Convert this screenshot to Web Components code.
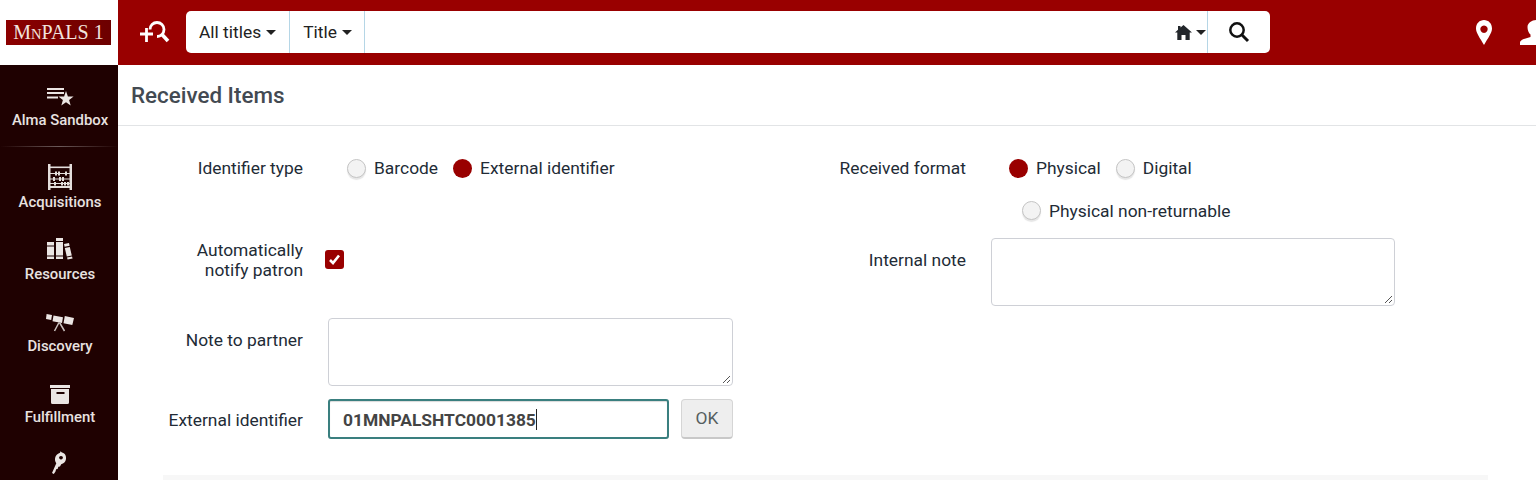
<!DOCTYPE html>
<html lang="en"><head><meta charset="utf-8"><title>Received Items</title>
<style>
html,body{margin:0;height:480px;overflow:hidden;background:#fff}
body{font-family:Roboto,"Liberation Sans",sans-serif;font-size:17.4px;color:#222b36}
alma-app{width:1536px;height:480px}
</style></head><body>
<alma-app>
  <alma-header slot="header"></alma-header>
  <alma-sidebar slot="side">
    <nav-item first h="82" label="Alma Sandbox" icon="sandbox"></nav-item>
    <nav-item h="72" label="Acquisitions" icon="abacus"></nav-item>
    <nav-item h="72" label="Resources" icon="books"></nav-item>
    <nav-item h="71" label="Discovery" icon="telescope"></nav-item>
    <nav-item h="71" label="Fulfillment" icon="box"></nav-item>
    <nav-item h="72" label="" icon="key"></nav-item>
  </alma-sidebar>
  <received-form></received-form>
</alma-app>
<script>
const el=(name,html)=>{customElements.define(name,class extends HTMLElement{
  constructor(){super();this.attachShadow({mode:'open'});if(typeof html!=='function')this.shadowRoot.innerHTML=html}
  connectedCallback(){ if(typeof html==='function') this.shadowRoot.innerHTML=html(this) }
})};
const icons={
sandbox:`<svg style="margin-left:2px" width="28" height="24" viewBox="0 0 28 24" fill="#ebe5e3"><rect x="1" y="4" width="17" height="2"/><rect x="1" y="8" width="17" height="2"/><rect x="1" y="12.500" width="11" height="2"/><path d="M20 7L21.900 12.400 27.600 12.500 23.100 15.900 24.700 21.500 20 18.200 15.300 21.500 16.900 15.900 12.400 12.500 18.100 12.400z"/></svg>`,
abacus:`<svg width="26" height="26" viewBox="0 0 26 26" fill="#e4dedc"><rect x="2" y="0" width="2.500" height="26"/><rect x="23.500" y="0" width="2.500" height="26"/><rect x="4" y="2.500" width="20" height="1.600"/><rect x="4" y="22" width="20" height="2"/><rect x="4" y="9" width="20" height="1"/><rect x="4" y="14.500" width="20" height="1"/><rect x="4" y="19" width="20" height="1"/><rect x="9" y="7.500" width="2" height="4"/><rect x="12" y="7.500" width="2" height="4"/><rect x="19" y="7.500" width="2" height="4"/><rect x="7" y="13" width="2" height="4"/><rect x="13" y="13" width="2" height="4"/><rect x="16" y="13" width="2" height="4"/><rect x="8" y="18" width="2" height="3.500"/><rect x="15" y="18" width="2" height="3.500"/><rect x="18" y="18" width="2" height="3.500"/><rect x="21" y="18" width="2" height="3.500"/></svg>`,
books:`<svg width="28" height="23" viewBox="0 0 28 23" fill="#ebe5e3"><path d="M2 4h7v3.500H2zM2 8.500h7v9H2zM2 18.500h7v2.500H2zM11 0h7v3H11zM11 4h7v13.500H11zM11 18.500h7v2.500H11z"/><path d="M19 6l5-1 .6 2.800-5 1zM19.800 10l5-1 2 8.500-5 1zM22 19.400l5-1 .6 2-5 1z"/></svg>`,
telescope:`<svg width="30" height="24" viewBox="0 0 30 24" fill="#ebe5e3"><path d="M2.600 5L8 6 7.200 11 2 10zM9.500 6.500L19 8.200 18 14 8.500 12.300zM20.800 7L30 9 28.300 16 19.500 14.200z"/><path fill="none" stroke="#c9c1bf" stroke-width="1.500" d="M15 13.500L10.500 22M15.500 13.500L20.500 22"/></svg>`,
box:`<svg style="margin:5px 0 0 2px" width="20" height="19" viewBox="0 0 20 19" fill="#ebe5e3"><path d="M0 0h20v3H0z"/><path fill-rule="evenodd" d="M1 4h18v13.500a1.500 1.500 0 0 1-1.500 1.500h-15A1.500 1.500 0 0 1 1 17.500zM6.500 7v2h8V7z"/></svg>`,
key:`<svg width="16" height="24" viewBox="0 0 16 24" fill="#ebe5e3"><path fill-rule="evenodd" d="M9.500.3l1.400 1.300C13.500 2 15.500 4.500 15 8c-.4 2.700-2.300 4.700-4.800 5.200L9 15.500l-1.600.2-.8 2.300-1.500.2-.6 2.300-1.700 2.500-1.800-1 4.300-9.800C3.500 10 3.500 6 6 3.500 7 2.500 8 2 9 1.700zM10 5a1.900 1.700 0 1 0 .01 0z"/></svg>`
};
el('alma-app',`<style>
:host{display:grid;grid-template-columns:118px 1fr;grid-template-rows:65px 1fr;overflow:hidden}
.h{grid-column:1/3;min-width:0}
.s{min-height:0;overflow:hidden}
.m{min-width:0;overflow:hidden}
</style>
<div class="h"><slot name="header"></slot></div>
<div class="s"><slot name="side"></slot></div>
<div class="m"><slot></slot></div>`);

el('alma-header',`<style>
:host{display:flex;height:65px;background:#990000;font:17.4px/22px Roboto,sans-serif;color:#222}
.logo{width:118px;background:#fff;flex:none;display:flex;align-items:center;justify-content:center}
.mark{width:105px;height:25px;background:linear-gradient(90deg,#8c0000,#7a0000 55%,#6d0000);color:#f1e4de;font:20px/25px "Liberation Serif",serif;text-align:center;white-space:nowrap;margin-right:1px}
.mark small{font-size:14.5px}
.adv{width:68px;flex:none;display:flex;align-items:center;justify-content:center}
.adv svg{margin-left:6px}
.box{width:1084px;height:42px;margin-top:11px;flex:none;background:#fff;border-radius:5px;display:flex;align-items:stretch}
.dd{display:flex;align-items:center;gap:5px;padding:0 13px;border-right:1px solid #b5d6e6;height:42px;box-sizing:border-box}
.dd.second{padding-left:13px;padding-right:12px}
.c{width:0;height:0;border:5px solid transparent;border-top-color:#222;border-bottom:0}
.sp{flex:1}
.home{display:flex;align-items:center;gap:4px;padding-right:1px;border-right:1px solid #b5d6e6}
.go{width:62px;display:flex;align-items:center;justify-content:center}
.r{flex:1;display:flex;align-items:center;justify-content:flex-end;overflow:hidden}
.pin{margin-right:28px}
.user{flex:none;margin-right:-16px;margin-bottom:1px}
</style>
<div class="logo"><div class="mark">M<small>N</small>PALS 1</div></div>
<div class="adv"><svg width="30" height="26" viewBox="0 0 30 26" fill="none" stroke="#fff"><path stroke-width="2.800" d="M0 14h13M6.500 8v14"/><path stroke-width="2.800" d="M10 9.500a7 7 0 1 1 7 7"/><path stroke-width="3.600" d="M22 14.500l6 6.500"/></svg></div>
<div class="box">
 <div class="dd"><span>All titles</span><span class="c"></span></div>
 <div class="dd second"><span>Title</span><span class="c"></span></div>
 <div class="sp"></div>
 <div class="home"><svg width="17" height="15" viewBox="0 0 17 15" fill="#22262b"><path d="M8.500 0L17 7.500h-2.300V15H10.500V10h-4v5H2.300V7.500H0L3 4.800V1h2.500v1.600z"/></svg><span class="c" style="margin-top:1px"></span></div>
 <div class="go"><svg width="22" height="22" viewBox="0 0 22 22" fill="none" stroke="#111"><circle cx="9" cy="9" r="6.700" stroke-width="2.500"/><path stroke-width="3" d="M13.800 13.800L20 20"/></svg></div>
</div>
<div class="r">
 <svg class="pin" width="16" height="25" viewBox="0 0 16 25"><path fill="#fff" fill-rule="evenodd" d="M8 0c4.500 0 8 3.500 8 8.500 0 4.500-4 9.500-8 16.500C4 18 0 13 0 8.500 0 3.500 3.500 0 8 0zm0 5.500a3.700 3.700 0 1 0 .01 0z"/></svg>
 <svg class="user" width="32" height="25" viewBox="0 0 32 25" fill="#fff"><path d="M16 0c4 0 6.500 3 6.500 7 0 3-1.200 6-3 7.600v2.400c4 1.500 10 2.500 10 6v2H0v-2c0-3.500 6-4.500 10.500-6v-2.400C8.500 13 7.500 10 7.500 7 7.500 3 12 0 16 0z"/></svg>
</div>`);

el('alma-sidebar',`<style>:host{display:flex;flex-direction:column;width:118px;height:415px;background:#1f0101;overflow:hidden}</style><slot></slot>`);

el('nav-item',h=>{const f=h.hasAttribute('first');return `<style>
:host{display:flow-root;flex:none;height:${h.getAttribute('h')}px;box-sizing:border-box;${f?'background:linear-gradient(90deg,transparent,#6c5a5a 50%,transparent) bottom/100% 1px no-repeat;':''}}
.i{height:30px;margin-top:${f?16:15}px;display:flex;align-items:center;justify-content:center}
.l{font:500 14.9px/20px Roboto,sans-serif;color:#e8e2e0;text-align:center;white-space:nowrap;padding-left:2px;margin-top:${f?-1:0}px}
</style><div class="i">${icons[h.getAttribute('icon')]}</div><div class="l">${h.getAttribute('label')}</div>`});

el('radio-opt',h=>`<style>
:host{display:inline-flex;align-items:center;gap:8px;white-space:nowrap;font:17.4px/22px Roboto,sans-serif;color:#222b36}
.d{width:19px;height:19px;border-radius:50%;box-sizing:border-box;flex:none;${h.hasAttribute('checked')?'background:#990000;':'background:#f3f3f3;border:1px solid #c4c4c4;box-shadow:0 2px 1px #e6e6e6;'}}
</style><span class="d"></span><span><slot></slot></span>`);

el('field-row',h=>`<style>
:host{display:flex;align-items:${h.getAttribute('va')||'flex-start'}}
.l{box-sizing:border-box;width:${h.getAttribute('lw')||'185px'};flex:none;text-align:right;font:17.4px/20px Roboto,sans-serif;color:#222b36;padding-top:${h.getAttribute('lt')||'0'};padding-bottom:${h.getAttribute('lb')||'0'}}
.c{margin-left:${h.getAttribute('gap')||'25px'};flex:1;min-width:0}
</style><div class="l"><slot name="label"></slot></div><div class="c"><slot></slot></div>`);

el('note-area',h=>`<style>
:host{display:block;width:${h.getAttribute('w')||'405'}px;height:68px;box-sizing:border-box;border:1px solid #ced0d6;border-radius:4px;background:#fff;position:relative}
svg{position:absolute;right:1px;bottom:1px}
</style><svg width="9" height="9" viewBox="0 0 9 9" stroke="#555" stroke-width="1" fill="none"><path d="M1 8l7-7M5 8l3-3"/></svg>`);

el('check-box',`<style>
:host{display:block;width:19px;height:19px;border-radius:3px;background:#990000;margin-bottom:3px}
svg{display:block}
</style><svg width="19" height="19" viewBox="0 0 19 19" fill="none" stroke="#fff" stroke-width="2.600"><path d="M5 10l3 3 6-7.500"/></svg>`);

el('received-form',`<style>
:host{display:block;height:415px;font:17.4px/20px Roboto,sans-serif;color:#222b36;background:#fff}
h1{margin:0;height:61px;box-sizing:border-box;padding:17px 0 0 13px;font:500 22.4px/26px Roboto,sans-serif;color:#434a52;border-bottom:1px solid #e2e4e6}
.g{display:grid;grid-template-columns:673px 1fr;height:354px;position:relative}
.col{min-width:0;padding-top:31px}
.radios{display:flex;align-items:center;gap:15px;height:22px}
.ext{box-sizing:border-box;width:341px;height:40px;border:2px solid #3a7f7f;border-radius:3px;font:700 17.4px/38px Roboto,sans-serif;color:#444;padding-left:13px;white-space:nowrap;box-shadow:inset 0 1px 1px rgba(0,0,0,.15)}
.caret{display:inline-block;width:1px;height:21px;background:#222;vertical-align:-4px}
.btn{box-sizing:border-box;width:52px;height:40px;background:#eee;border:1px solid #d5d5d5;border-bottom:2px solid #c8c8c8;border-radius:4px;color:#555e60;font:17.4px/36px Roboto,sans-serif;text-align:center}
.line{display:flex;gap:12px}
.strip{position:absolute;left:45px;right:48px;top:349px;height:5px;background:#f7f7f7}
</style>
<h1>Received Items</h1>
<div class="g">
 <div class="col">
  <field-row gap="44px" va="center" style="height:22px">
    <span slot="label">Identifier type</span>
    <div class="radios"><radio-opt>Barcode</radio-opt><radio-opt checked>External identifier</radio-opt></div>
  </field-row>
  <field-row gap="22px" va="center" lb="2px" style="margin-top:62px;height:40px">
    <span slot="label">Automatically<br>notify patron</span>
    <check-box></check-box>
  </field-row>
  <field-row style="margin-top:37px" lt="12px">
    <span slot="label">Note to partner</span>
    <note-area></note-area>
  </field-row>
  <field-row va="center" lt="2px" style="margin-top:13px">
    <span slot="label">External identifier</span>
    <div class="line"><div class="ext">01MNPALSHTC0001385<span class="caret"></span></div><div class="btn">OK</div></div>
  </field-row>
 </div>
 <div class="col">
  <field-row lw="175px" gap="43px" style="height:22px" va="center">
    <span slot="label">Received format</span>
    <div class="radios"><radio-opt checked>Physical</radio-opt><radio-opt>Digital</radio-opt></div>
  </field-row>
  <field-row lw="175px" gap="56px" style="height:22px;margin-top:22px" va="center">
    <span slot="label"></span>
    <radio-opt>Physical non-returnable</radio-opt>
  </field-row>
  <field-row lw="175px" style="margin-top:15px" lt="12px">
    <span slot="label">Internal note</span>
    <note-area w="404"></note-area>
  </field-row>
 </div>
 <div class="strip"></div>
</div>`);
</script>
</body></html>
